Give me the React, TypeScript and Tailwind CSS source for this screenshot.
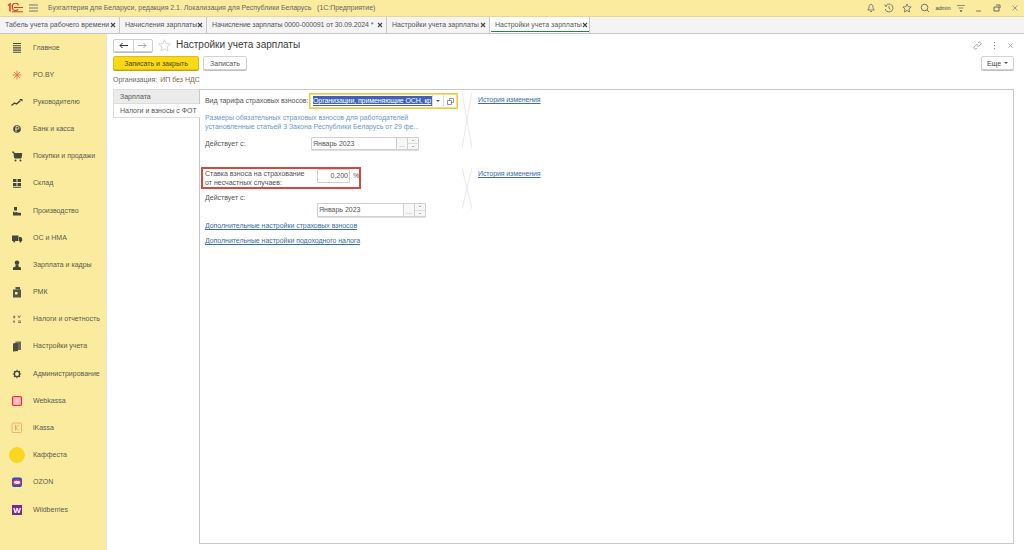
import React from "react";

const F = "font-['Liberation_Sans',Arial,sans-serif]";

const Ic = ({ children }: { children: React.ReactNode }) => (
  <svg width="16" height="16" viewBox="0 0 16 16" fill="none">{children}</svg>
);

const sideItems: [string, React.ReactNode][] = [
  ["Главное", <Ic><path d="M4 3.500h8M4 5.700h8M4 7.900h8M4 10.100h8M4 12.300h8" stroke="#4a4a40" strokeWidth="1.100" /></Ic>],
  ["РО.BY", <Ic><path d="M8 3.500v9M3.500 8h9M4.800 4.800l6.400 6.400M11.200 4.800l-6.400 6.400" stroke="#e8604c" strokeWidth="0.800" /></Ic>],
  ["Руководителю", <Ic><path d="M2.500 11.500l3-2.500 2 1 4-3.500" stroke="#3f3f35" strokeWidth="1.300" /><path d="M10 5h3.500v2.500z" fill="#3f3f35" /></Ic>],
  ["Банк и касса", <Ic><circle cx="8" cy="8" r="3.800" fill="#46463c" /><path d="M7 11V5.500h1.600a1.300 1.300 0 010 2.700H6" stroke="#f9ec9c" strokeWidth="0.900" /></Ic>],
  ["Покупки и продажи", <Ic><path d="M3 4h1.800l.8 6h6.400l.8-4.500H5" fill="#46463c" stroke="#46463c" /><circle cx="6.500" cy="12.500" r="1" fill="#46463c" /><circle cx="11.500" cy="12.500" r="1" fill="#46463c" /></Ic>],
  ["Склад", <Ic><path d="M4 4h3.500v3H4zM8.500 4H12v3H8.500zM4 8h3.500v3H4zM8.500 8H12v3H8.500zM4 11.800h8v1H4z" fill="#46463c" /></Ic>],
  ["Производство", <Ic><path d="M4 12.500V8.500l2.500 1.200V8.500l2.500 1.200h3v2.800z" fill="#46463c" /><path d="M5 4h3v3.500H5z" fill="#46463c" /></Ic>],
  ["ОС и НМА", <Ic><path d="M3 5.500h6.500v5.500H3zM10 7h2.200l1 1.800V11H10z" fill="#46463c" /><circle cx="5.200" cy="11.500" r="1" fill="#46463c" /><circle cx="11.500" cy="11.500" r="1" fill="#46463c" /></Ic>],
  ["Зарплата и кадры", <Ic><circle cx="8" cy="5.800" r="2.300" fill="#46463c" /><path d="M6.700 8h2.600l.4 1.800 2.300 .8v2.400h-8v-2.400l2.300-.8z" fill="#46463c" /></Ic>],
  ["РМК", <Ic><path d="M4 5.500h8v8H4z" fill="#55554a" /><path d="M6.500 3h4.500v2.500H6.500z" fill="#55554a" /><path d="M6 8h2.500v2.500H6z" fill="#f9ec9c" /></Ic>],
  ["Налоги и отчетность", <Ic><path d="M4 6h2.500M5.200 4.500v3M9 11.500h3M9 10h3M4 11.500l2-1.800M4 9.700l2 1.800M9 4.500l1.200 2.300 1.200-2.300" stroke="#4a4a40" strokeWidth="0.700" /></Ic>],
  ["Настройки учета", <Ic><path d="M4 5.500l5-1V13l-5 .5z" fill="#4a4a40" /><path d="M6.500 3.500H12V12H9V4.500l-2.500 .5z" fill="#6a6a5c" /></Ic>],
  ["Администрирование", <Ic><circle cx="8" cy="8" r="2.600" stroke="#46463c" strokeWidth="1.300" /><path d="M8 3.800v1.600M8 10.600v1.600M3.800 8h1.600M10.600 8h1.600M5 5l1.100 1.100M9.900 9.900L11 11M11 5L9.900 6.100M6.100 9.900L5 11" stroke="#46463c" strokeWidth="1.100" /></Ic>],
  ["Webkassa", <Ic><rect x="3.500" y="3.500" width="9" height="9" rx="1.200" fill="#f4a8ac" stroke="#e8334f" strokeWidth="1.200" /><path d="M5.500 6h5M5.500 8h5M5.500 10h5M7 5.500v5M9 5.500v5" stroke="#fbdcd8" strokeWidth="0.700" /></Ic>],
  ["iKassa", <Ic><rect x="3" y="3" width="9.500" height="9.500" rx="1" stroke="#eba878" strokeWidth="0.900" /><path d="M6.500 5v5.500M9.500 5L6.800 7.800l2.700 2.700" stroke="#e89e6c" strokeWidth="0.900" /></Ic>],
  ["Каффеста", <svg width="16" height="16" viewBox="0 0 16 16" className="overflow-visible"><circle cx="8" cy="8" r="7.500" fill="#f9d71c" stroke="#f5c91a" strokeWidth="0.600" /></svg>],
  ["OZON", <Ic><rect x="3" y="3.500" width="10" height="9.500" rx="2" fill="#2a50c8" /><ellipse cx="8" cy="8.300" rx="3.800" ry="2.300" stroke="#f0314f" strokeWidth="1.400" fill="#fff" /></Ic>],
  ["Wildberries", <svg width="16" height="16" viewBox="0 0 16 16"><rect x="3" y="3" width="10" height="10" fill="#7b2a8f" /><text x="8" y="11" fontSize="8" fontWeight="700" textAnchor="middle" fill="#fff">W</text></svg>],
];

const Tab = ({ label, w, active, tight }: { label: string; w: string; active?: boolean; tight?: boolean }) => (
  <div className={`${w} h-full shrink-0 flex items-center justify-between pl-[5px] pr-[3px] border-r border-[#c9c9c9] relative ${active ? "bg-white" : "bg-[#f4f4f4]"}`}>
    <span className={`whitespace-nowrap ${tight ? "tracking-[-0.1px]" : ""}`}>{label}</span>
    <svg className="shrink-0" width="6" height="6" viewBox="0 0 6 6"><path d="M1 1l4 4M5 1L1 5" stroke="#444" strokeWidth="1.100" /></svg>
    {active && <div className="absolute left-[1px] right-0 bottom-[1px] h-[1px] bg-[#1a8a4a]" />}
  </div>
);

const Spin = () => (
  <div className="flex flex-col w-[11px] border-l border-[#cfcfcf] h-full bg-[#f7f7f7]">
    <div className="flex-1 flex items-center justify-center border-b border-[#dcdcdc]"><span className="w-0 h-0 border-x-[1.500px] border-x-transparent border-b-[1.500px] border-b-[#666]" /></div>
    <div className="flex-1 flex items-center justify-center"><span className="w-0 h-0 border-x-[1.500px] border-x-transparent border-t-[1.500px] border-t-[#666]" /></div>
  </div>
);

const DateField = ({ w, tw, h }: { w: string; tw: string; h: string }) => (
  <div className={`${w} ${h} flex items-center border border-[#cfcfcf] shadow-[0_1px_0_#e0e0e0] rounded-[1px] bg-white`}>
    <span className={`${tw} pl-[1px] shrink-0 text-[#555]`}>Январь 2023</span>
    <div className="w-[11px] h-full shrink-0 border-l border-[#cfcfcf] bg-[#f7f7f7] flex items-end justify-center text-[#999] leading-[9px]">...</div>
    <Spin />
  </div>
);

const Cross = ({ h }: { h: string }) => (
  <svg className={`${h} w-[10px] shrink-0`} viewBox="0 0 10 60" preserveAspectRatio="none">
    <path d="M0 0L10 60M10 0L0 60" stroke="#e2e2e2" strokeWidth="0.800" vectorEffect="non-scaling-stroke" />
  </svg>
);

const Hist = () => <a className="underline text-[#3a6ea8] whitespace-nowrap tracking-[-0.1px]">История изменения</a>;

const Cell = ({ children }: { children: React.ReactNode }) => (
  <div className="w-[18px] flex justify-center items-center">{children}</div>
);

export default function App() {
  return (
    <div className={`${F} w-[1024px] h-[550px] overflow-hidden flex flex-col bg-white text-[7px] leading-[10px] text-[#555]`}>
      {/* title bar */}
      <div className="h-[17px] shrink-0 bg-[#fbeb9f] flex items-center border-b border-[#e6d894]">
        <svg className="ml-[7px]" width="16" height="10" viewBox="0 0 16 10" fill="none" stroke="#dd3a2c">
          <path d="M1 2.500L3 1v7.500" strokeWidth="1.500" />
          <path d="M11.500 2.300A3 3 0 105.500 4.500a3 3 0 005.500 1.800" strokeWidth="1.200" />
          <path d="M7 4.500h9M5 8.800h11" strokeWidth="1" />
        </svg>
        <svg className="ml-[6px]" width="10" height="8" viewBox="0 0 10 8"><path d="M0 1h9M0 4h9M0 7h9" stroke="#777" /></svg>
        <span className="ml-[9px] text-[#666] whitespace-nowrap tracking-[-0.03px]">Бухгалтерия для Беларуси, редакция 2.1. Локализация для Республики Беларусь&nbsp;&nbsp;&nbsp;(1С:Предприятие)</span>
        <div className="ml-auto flex items-center">
          <Cell><svg width="10" height="10" viewBox="0 0 10 10" fill="none" stroke="#666" strokeWidth="0.800"><path d="M5 1.500c-1.500 0-2 1-2 2.500 0 1.500-.7 2.500-1.300 3h6.600C7.700 6.500 7 5.500 7 4c0-1.500-.5-2.500-2-2.500zM4 8.500h2" /></svg></Cell>
          <Cell><svg width="10" height="10" viewBox="0 0 10 10" fill="none" stroke="#666" strokeWidth="0.800"><path d="M1.600 3A4 4 0 115 9a4 4 0 01-3.800-3" /><path d="M5 3v2.300l1.500 1M.8 1.500L1.400 3.300 3 3" /></svg></Cell>
          <Cell><svg width="10" height="10" viewBox="0 0 10 10" fill="none" stroke="#666" strokeWidth="0.800"><path d="M5 1l1.200 2.700 3 .3-2.300 2 .7 3L5 7.500 2.400 9l.7-3L.8 4l3-.3z" /></svg></Cell>
          <Cell><svg width="10" height="10" viewBox="0 0 10 10" fill="none" stroke="#666" strokeWidth="0.900"><circle cx="4.500" cy="4.500" r="3.300" /><path d="M7 7l2 2" /></svg></Cell>
          <Cell><span className="text-[5.500px] text-[#444] font-medium">admin</span></Cell>
          <Cell><svg width="9" height="9" viewBox="0 0 9 9" stroke="#777" strokeWidth="0.800"><path d="M0 1.500h8M1.500 4h5" /><path d="M3 6.500h2L4 8z" fill="#777" /></svg></Cell>
          <Cell><svg width="8" height="8" viewBox="0 0 8 8" stroke="#777"><path d="M1 7h5" /></svg></Cell>
          <Cell><svg width="8" height="8" viewBox="0 0 8 8" fill="none" stroke="#666"><path d="M1 3h5v4H1zM3 1h4v3" /></svg></Cell>
          <Cell><svg width="8" height="8" viewBox="0 0 8 8" stroke="#888" strokeWidth="0.800"><path d="M1.500 1.500l5 5M6.500 1.500l-5 5" /></svg></Cell>
        </div>
      </div>
      {/* tabs */}
      <div className="h-[17px] shrink-0 flex bg-[#f4f4f4] border-b border-[#c4c4c4] text-[#555]">
        <Tab w="w-[120px]" label="Табель учета рабочего времени" />
        <Tab w="w-[87px]" label="Начисления зарплаты" />
        <Tab w="w-[180px]" label="Начисление зарплаты 0000-000091 от 30.09.2024 *" tight />
        <Tab w="w-[103px]" label="Настройки учета зарплаты" />
        <Tab w="w-[100px]" label="Настройки учета зарплаты" active />
      </div>
      <div className="flex-1 flex min-h-0">
        {/* sidebar */}
        <div className="w-[107px] shrink-0 bg-[#fbeb9f] border-r border-[#e5e5e5] flex flex-col">
          {sideItems.map(([label, icon]) => (
            <div key={label} className="h-[27.180px] shrink-0 flex items-center text-[#5a5a4c]">
              <div className="w-[33px] shrink-0 flex justify-center pl-[1px]">{icon}</div>
              <span className="whitespace-nowrap">{label}</span>
            </div>
          ))}
        </div>
        {/* main */}
        <div className="flex-1 min-w-0 flex flex-col pl-[6px] pr-[10px]">
          {/* header row */}
          <div className="h-[22px] shrink-0 flex items-center">
            <div className="w-[40px] h-[13px] flex border border-[#cfcfcf] rounded-[2px] shadow-[0_1px_0_#bbb]">
              <div className="flex-1 flex items-center justify-center border-r border-[#cfcfcf]">
                <svg width="9" height="7" viewBox="0 0 9 7" fill="none" stroke="#333"><path d="M9 3.500H1M3.500 1L1 3.500 3.500 6" /></svg>
              </div>
              <div className="flex-1 flex items-center justify-center">
                <svg width="9" height="7" viewBox="0 0 9 7" fill="none" stroke="#aaa"><path d="M0 3.500h8M5.500 1L8 3.500 5.500 6" /></svg>
              </div>
            </div>
            <svg className="ml-[5px]" width="13" height="13" viewBox="0 0 13 13" fill="none" stroke="#ccc" strokeWidth="0.800"><path d="M6.500 .8l1.700 3.800 4.100.4-3.100 2.800.9 4.100-3.600-2.100-3.600 2.100.9-4.100L.7 5l4.100-.4z" /></svg>
            <span className="ml-[5px] text-[10px] leading-none text-[#3a3a3a] whitespace-nowrap">Настройки учета зарплаты</span>
            <div className="ml-auto flex items-center gap-[11px]">
              <svg width="9" height="9" viewBox="0 0 9 9" fill="none" stroke="#999" strokeWidth="0.800"><path d="M4 5a1.500 1.500 0 002 0l2-2a1.500 1.500 0 00-2-2L5 2M5 4a1.500 1.500 0 00-2 0L1 6a1.500 1.500 0 002 2l1-1" /></svg>
              <svg width="3" height="9" viewBox="0 0 3 9" fill="#888"><path d="M1 1h1v1.300H1zM1 4h1v1.300H1zM1 7h1v1.300H1z" /></svg>
              <svg width="7" height="7" viewBox="0 0 7 7" stroke="#999" strokeWidth="0.800"><path d="M1.500 1.500l4 4M5.500 1.500l-4 4" /></svg>
            </div>
          </div>
          {/* command bar */}
          <div className="h-[14px] shrink-0 flex items-stretch">
            <button className="w-[86px] rounded-[2px] bg-[#fbd914] border border-[#dcbf12] shadow-[0_1px_0_#bca514] text-[#4a4410] text-[7px] leading-none">Записать и закрыть</button>
            <button className="ml-[4px] w-[44px] rounded-[2px] bg-white border border-[#d2d2d2] shadow-[0_1px_0_#c0c0c0] text-[#555] text-[7px] leading-none">Записать</button>
            <button className="ml-auto w-[33px] rounded-[2px] bg-white border border-[#d2d2d2] shadow-[0_1px_0_#c0c0c0] text-[#444] text-[7px] leading-none flex items-center justify-center gap-[3px]">Еще<span className="w-0 h-0 border-x-[2px] border-x-transparent border-t-[2px] border-t-[#555]" /></button>
          </div>
          <div className="h-[10px] shrink-0 mt-[5px] flex items-center whitespace-nowrap">
            <span className="text-[#666]">Организация:</span>
            <span className="ml-[3px] text-[#7a6440]">ИП без НДС</span>
          </div>
          {/* tabs + panel */}
          <div className="flex-1 min-h-0 mt-[4px] mb-[6px] flex">
            <div className="w-[86px] shrink-0 flex flex-col">
              <div className="h-[15px] bg-[#ebebeb] border border-[#dcdcdc] border-r-0 flex items-center pl-[6px] rounded-tl-[2px]">Зарплата</div>
              <div className="h-[14px] bg-white border-l border-b border-[#dcdcdc] -mr-[1px] relative z-10 flex items-center pl-[6px] whitespace-nowrap">Налоги и взносы с ФОТ</div>
            </div>
            <div className="flex-1 border border-[#c8c8c8] pl-[5px] pt-[3px] flex flex-col">
              {/* top block */}
              <div className="flex">
                <div className="w-[253px] shrink-0 flex flex-col">
                  <div className="h-[16px] flex items-center">
                    <span className="whitespace-nowrap w-[104px] shrink-0 tracking-[-0.05px]">Вид тарифа страховых взносов:</span>
                    <div className="w-[149px] h-[16px] border border-[#f0c840] shadow-[inset_0_0_0_1px_#f5dd85] flex items-center pl-[3px] pr-[1px] bg-white">
                      <span className="w-[119px] shrink-0 overflow-hidden whitespace-nowrap underline bg-[#3f62b8] text-white h-[10px] leading-[10px] tracking-[-0.1px]">Организации, применяющие ОСН, кр</span>
                      <div className="w-[11px] h-full border-l border-[#dcdcdc] flex items-center justify-center"><span className="w-0 h-0 border-x-[2px] border-x-transparent border-t-[2px] border-t-[#555]" /></div>
                      <div className="w-[13px] h-full border-l border-[#dcdcdc] flex items-center justify-center">
                        <svg width="7" height="7" viewBox="0 0 7 7" fill="none" stroke="#777" strokeWidth="0.800"><path d="M.5 2.500h4v4h-4zM2.500 2.500V.5h4v4H4.500" /></svg>
                      </div>
                    </div>
                  </div>
                  <div className="mt-[4px] text-[#6a98cc] whitespace-nowrap leading-[9px] tracking-[-0.03px]">
                    <div>Размеры обязательных страховых взносов для работодателей</div>
                    <div>установленные статьей 3 Закона Республики Беларусь от 29 фе...</div>
                  </div>
                  <div className="mt-[6px] h-[13px] flex items-center">
                    <span className="w-[106px] shrink-0">Действует с:</span>
                    <DateField w="w-[108px]" tw="w-[84px]" h="h-[13px]" />
                  </div>
                </div>
                <div className="ml-[4px] mr-[6px] -mt-[1px] shrink-0"><Cross h="h-[56px]" /></div>
                <div className="mt-[2px]"><Hist /></div>
              </div>
              {/* second block */}
              <div className="mt-[17px] flex">
                <div className="w-[253px] shrink-0 flex flex-col">
                  <div className="w-[160px] h-[22px] -ml-[4px] border-2 border-[#d8473e] pl-[2px] flex items-start">
                    <div className="w-[112px] self-center shrink-0 leading-[9px] text-[#505050]">Ставка взноса на страхование<br />от несчастных случаев:</div>
                    <div className="w-[33px] h-[14px] shrink-0 border border-[#cfcfcf] rounded-[1px] flex items-center justify-end pr-[1px] text-[#505050]">0,200</div>
                    <span className="ml-[3px] mt-[2px]">%</span>
                  </div>
                  <div className="mt-[4px] h-[10px] flex items-center">Действует с:</div>
                  <div className="ml-[112px]"><DateField w="w-[109px]" tw="w-[85px]" h="h-[14px]" /></div>
                  <a className="mt-[4px] underline text-[#3a6ea8] whitespace-nowrap tracking-[-0.05px]">Дополнительные настройки страховых взносов</a>
                  <a className="mt-[5px] underline text-[#3a6ea8] whitespace-nowrap tracking-[-0.05px]">Дополнительные настройки подоходного налога</a>
                </div>
                <div className="ml-[4px] mr-[6px] mt-[1px] shrink-0"><Cross h="h-[41px]" /></div>
                <div className="mt-[2px]"><Hist /></div>
              </div>
            </div>
          </div>
        </div>
      </div>
    </div>
  );
}
